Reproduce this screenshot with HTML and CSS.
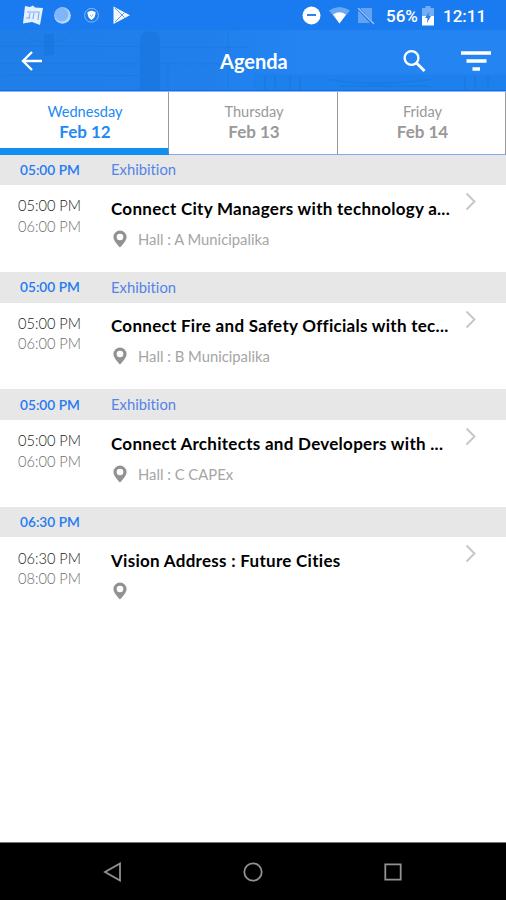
FILE: index.html
```html
<!DOCTYPE html>
<html lang="en">
<head>
<meta charset="utf-8">
<title>Agenda</title>
<link rel="stylesheet" href="styles.css">
</head>
<body>
<svg class="defs" width="0" height="0" aria-hidden="true">
  <symbol id="pin" viewBox="0 0 14 18"><path fill-rule="evenodd" d="M7 .5a6.600 6.600 0 0 0-6.600 6.600C.4 11.400 7 17.500 7 17.500s6.600-6.100 6.600-10.400A6.600 6.600 0 0 0 7 .5zm0 3.200a3.300 3.300 0 1 1 0 6.600 3.300 3.300 0 0 1 0-6.600z"/></symbol>
  <symbol id="chevron" viewBox="0 0 12 20"><path d="M1.500 1.500 9.500 9.500 1.500 17.500" fill="none" stroke="#c6c6c6" stroke-width="1.900"/></symbol>
</svg>
<div class="screen">
  <header class="top">
    <svg class="scene" viewBox="0 0 506 62" preserveAspectRatio="none" aria-hidden="true">
      <defs><linearGradient id="sky"><stop offset="0" stop-color="#207ee9"/><stop offset=".4" stop-color="#207feb"/><stop offset=".6" stop-color="#2384f2"/></linearGradient></defs>
      <path d="M0 0h506v62H0z" fill="url(#sky)"/>
      <path d="M140 62V12q0-11 10-11t10 11v50zM44 4h10v22H44z" fill="#1b78e3"/>
      <path d="M25 3q5 9 23 10 19-1 24-10M0 17h140M160 18h88M0 35h140M160 35h60M0 47h140M228 0v62M168 35v27" fill="none" stroke="#1972da" opacity=".35"/>
      <path d="M253 46h253v16H253z" fill="#1d80ec"/>
      <path d="M265 47v15M275 47v15M290 47v15M300 47v15M465 47v15M475 47v15M488 47v15M330 51q42 8 100 0M340 58h90" fill="none" stroke="#1777e2" stroke-width="2" opacity=".55"/>
    </svg>
    <div class="status">
      <svg class="status-left" width="140" height="30" viewBox="0 0 140 30">
        <path d="m25 6 5 1 3-1.500 2 2 8 .5-3 17-8-3-9 1.500z" fill="#e4efff"/>
        <path d="M27 12h12l-1 8M34 13l-1 6M30 13l-1 6M26 18h4" fill="none" stroke="#7fb2f6" stroke-width="1.200"/>
        <circle cx="62.500" cy="15.500" r="8.300" fill="#b9d7ff"/><circle cx="61.500" cy="14.500" r="7" fill="#80b5fa"/>
        <circle cx="91.500" cy="15.300" r="6.900" fill="none" stroke="#85b8fb"/><path d="m91.500 10.500 4 1.500q.5 5-4 8-4.500-3-4-8z" fill="#fff"/><path d="m90 15 1.500 1.500 2-2.500" fill="none" stroke="#66a6f7" stroke-width=".8"/>
        <path d="m113.500 6.500 16.500 8.800-16.500 8.800z" fill="#f2f7ff"/><path d="m115 8 9.500 9.500M115 22l9.500-9.500" stroke="#5b9cf3" stroke-width="1"/>
      </svg>
      <svg class="status-right" width="76" height="30" viewBox="0 0 76 30">
        <circle cx="11.500" cy="15.500" r="9" fill="#fff"/><path d="M7 15h9" stroke="#347fe5" stroke-width="2"/>
        <path d="M29 10.500q10.500-7 21 0l-10.500 13z" fill="#69a8f7"/><path d="M33 14.500q6.500-4.500 13 0l-6.500 9z" fill="#fff"/>
        <path d="M61 8h11v15H58V11z" fill="#65a3f2"/><path d="m57 7 16 17" stroke="#1979ef" stroke-width="3"/><path d="m58 8 16 16" stroke="#9cc4f5" stroke-width="1.300"/>
      </svg>
      <span class="percent">56%</span>
      <svg class="battery" width="12" height="20" viewBox="0 0 12 20"><path d="M3.500 0h5v2H12v8H0V2h3.500z" fill="#73adf6"/><path d="M0 10h12v9.500H0z" fill="#fff"/><path d="M7 6 3 12h2.500L5 17l4-7H6.500z" fill="#2c7ee8"/></svg>
      <span class="clock">12:11</span>
    </div>
    <div class="bar">
      <svg class="back" width="22" height="20" viewBox="0 0 22 20"><path d="M11 1 2 10l9 9M2 10h19" fill="none" stroke="#fff" stroke-width="2.400"/></svg>
      <h1>Agenda</h1>
      <svg class="search" width="24" height="24" viewBox="0 0 24 24"><circle cx="8.500" cy="9" r="6.900" fill="none" stroke="#fff" stroke-width="2.300"/><path d="m13.500 14 8 8" stroke="#fff" stroke-width="2.800"/></svg>
      <svg class="filter" width="30" height="20" viewBox="0 0 30 20"><path d="M0 2h30M5.500 10h20M11.500 18h7.500" stroke="#fff" stroke-width="3.500"/></svg>
    </div>
  </header>
  <nav class="tabs">
    <div class="tab active"><span>Wednesday</span><b>Feb 12</b></div>
    <div class="tab"><span>Thursday</span><b>Feb 13</b></div>
    <div class="tab"><span>Friday</span><b>Feb 14</b></div>
  </nav>
  <main>
    <section>
      <div class="slot"><b>05:00 PM</b><span>Exhibition</span></div>
      <div class="event"><div class="times"><div>05:00 PM</div><div>06:00 PM</div></div>
        <div class="info"><h2>Connect City Managers with technology a...</h2><p><svg class="pin"><use href="#pin"/></svg><span>Hall : A Municipalika</span></p></div>
        <svg class="chevron"><use href="#chevron"/></svg></div>
    </section>
    <section>
      <div class="slot"><b>05:00 PM</b><span>Exhibition</span></div>
      <div class="event"><div class="times"><div>05:00 PM</div><div>06:00 PM</div></div>
        <div class="info"><h2>Connect Fire and Safety Officials with tec...</h2><p><svg class="pin"><use href="#pin"/></svg><span>Hall : B Municipalika</span></p></div>
        <svg class="chevron"><use href="#chevron"/></svg></div>
    </section>
    <section>
      <div class="slot"><b>05:00 PM</b><span>Exhibition</span></div>
      <div class="event"><div class="times"><div>05:00 PM</div><div>06:00 PM</div></div>
        <div class="info"><h2>Connect Architects and Developers with ...</h2><p><svg class="pin"><use href="#pin"/></svg><span>Hall : C CAPEx</span></p></div>
        <svg class="chevron"><use href="#chevron"/></svg></div>
    </section>
    <section>
      <div class="slot"><b>06:30 PM</b></div>
      <div class="event"><div class="times"><div>06:30 PM</div><div>08:00 PM</div></div>
        <div class="info"><h2>Vision Address : Future Cities</h2><p><svg class="pin"><use href="#pin"/></svg></p></div>
        <svg class="chevron"><use href="#chevron"/></svg></div>
    </section>
  </main>
  <footer>
    <svg width="20" height="20" viewBox="0 0 20 20"><path d="M17 1.500v17L2 10z"/></svg>
    <svg width="20" height="20" viewBox="0 0 20 20"><circle cx="10" cy="10" r="8.700"/></svg>
    <svg width="20" height="20" viewBox="0 0 20 20"><path d="M2.300 2.300h15.400v15.400H2.300z"/></svg>
  </footer>
</div>
</body>
</html>
```
FILE: styles.css
```css
* { box-sizing: border-box; }
body { margin: 0; font-family: Lato, "Liberation Sans", sans-serif; font-variant-ligatures: none; background: #fff; }
h1, h2, p { margin: 0; }
svg { display: block; flex: none; }
.defs { position: absolute; }
.screen { width: 506px; height: 900px; display: flex; flex-direction: column; overflow: hidden; }

.top { position: relative; height: 91px; flex: none; background: #197bef; border-bottom: 1px solid #0873e7; color: #fff; }
.scene { position: absolute; left: 0; top: 30px; width: 506px; height: 60px; }
.status { position: relative; display: flex; height: 30px; align-items: center; font: 500 17px/30px Roboto, sans-serif; }
.status-right { margin-left: 160px; }
.percent { width: 32px; margin-left: 10px; padding-top: 2px; white-space: nowrap; }
.battery { margin-left: 4px; margin-top: 1px; }
.clock { margin-left: 9px; padding-top: 2px; }
.bar { position: relative; display: grid; grid-template-columns: 190px 1fr 68px 122px; height: 61px; align-items: center; }
.back { margin-left: 21px; }
h1 { font-size: 20px; line-height: 24px; font-weight: 700; margin-left: 30px; }
.search { margin-left: 87px; }
.filter { margin-left: 77px; }

.tabs { display: grid; grid-template-columns: 169px 169px 168px; height: 63.500px; flex: none; border-top: 1px solid #90b4f5; }
.tab { display: flex; flex-direction: column; align-items: center; padding: 10px 0 0 2px; border-right: 1px solid #999; border-bottom: 1px solid #85a8ed; color: #999; }
.tab span { font-size: 14.600px; line-height: 20px; }
.tab b { font-size: 17px; line-height: 20px; font-weight: 700; }
.tab.active { color: #218af3; border-bottom: 7px solid #118ff0; }

main { flex: 1; }
section { height: 117.400px; }
.slot { height: 30.700px; display: flex; align-items: center; background: #e7e7e7; color: #247af2; font-size: 13.700px; padding: 0 0 1px 20px; }
.slot b { width: 91px; font-weight: 600; }
.slot span { color: #5484e5; font-size: 14.800px; }
.event { display: flex; padding: .6px 0 0 18px; }
.times { width: 93px; padding-top: 10.700px; font-size: 14.600px; font-weight: 300; line-height: 20.500px; color: #222; }
.times div + div { color: #6c6c6c; }
.info { width: 354px; padding-top: 12px; }
h2 { font-size: 17px; line-height: 22px; font-weight: 700; letter-spacing: .28px; color: #000; white-space: nowrap; }
.info p { display: flex; align-items: center; height: 18px; margin-top: 10px; gap: 11px; padding-left: 2px; font-size: 14.800px; color: #a5a5a5; }
.pin { width: 14px; height: 18px; fill: #929292; }
.chevron { width: 12px; height: 20px; margin-top: 6.500px; }

footer { height: 58px; flex: none; display: flex; align-items: center; justify-content: center; gap: 120px; background: #000; border-top: 1px solid #777; }
footer svg { fill: none; stroke: #929292; stroke-width: 1.800; }
```
